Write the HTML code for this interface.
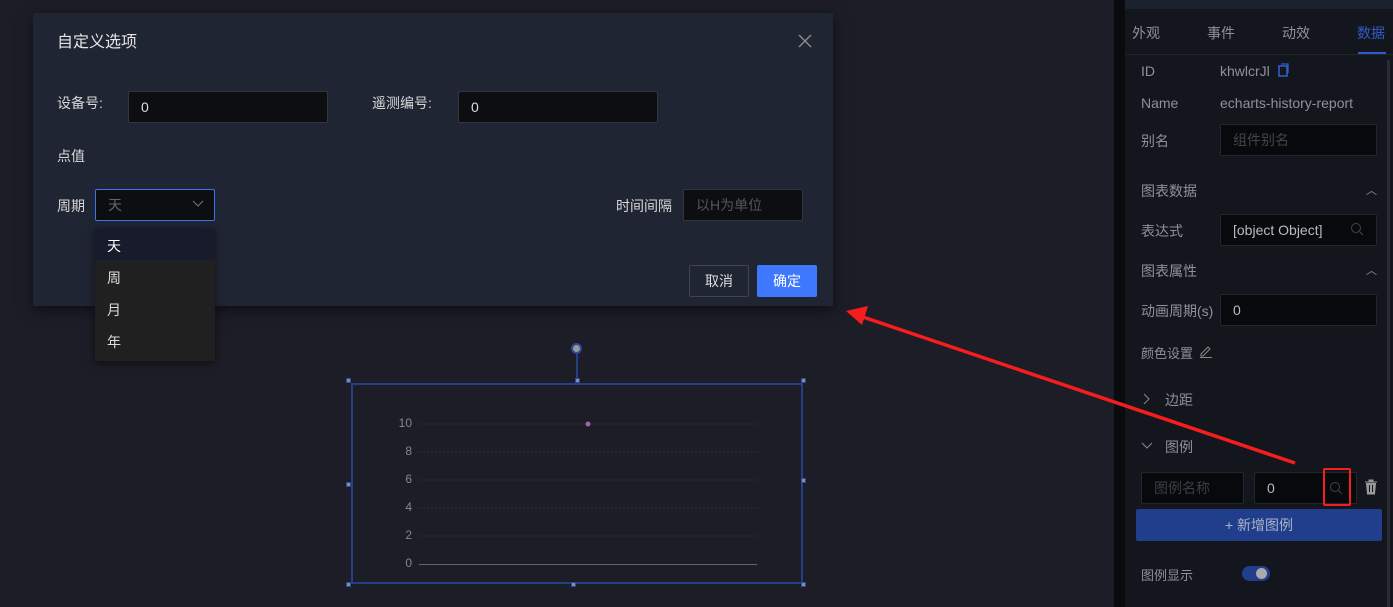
<!DOCTYPE html>
<html><head><meta charset="utf-8"><style>
*{margin:0;padding:0;box-sizing:border-box}
body{width:1393px;height:607px;overflow:hidden;background:#1c1d26;font-family:"Liberation Sans","Noto Sans CJK SC",sans-serif;position:relative;color:#ccc}
.a{position:absolute}
.modal{left:33px;top:13px;width:800px;height:293px;background:#202533;box-shadow:0 4px 14px rgba(0,0,0,.5)}
.lbl{font-size:14px;color:#d8d8d8}
.inp{background:#0d0e12;border:1px solid #33363d;border-radius:2px;font-size:14px;color:#ddd;padding-left:12px;display:flex;align-items:center}
.ph{color:#555}
.pl{font-size:14px;color:#8f9198}
.pin{background:#08090c;border:1px solid #23262d;border-radius:2px;display:flex;align-items:center;font-size:14px;color:#bbb;padding-left:12px}
.h{width:5px;height:5px;background:#8a8fa0;border:1px solid #2b4a9a}
</style></head><body>
<div class="a modal">
 <div class="a" style="left:24px;top:15px;font-size:16px;color:#e5e5e5">自定义选项</div>
 <svg class="a" style="left:765px;top:21px" width="14" height="14"><path d="M1 1L13 13M13 1L1 13" stroke="#888" stroke-width="1.5"/></svg>
 <div class="a lbl" style="left:24px;top:80px">设备号:</div>
 <div class="a inp" style="left:95px;top:78px;width:200px;height:32px">0</div>
 <div class="a lbl" style="left:339px;top:80px">遥测编号:</div>
 <div class="a inp" style="left:425px;top:78px;width:200px;height:32px">0</div>
 <div class="a lbl" style="left:24px;top:133px">点值</div>
 <div class="a lbl" style="left:24px;top:183px">周期</div>
 <div class="a inp" style="left:62px;top:176px;width:120px;height:32px;border-color:#3b74f0"><span class="ph" style="color:#666">天</span></div>
 <svg class="a" style="left:159px;top:187px" width="12" height="8"><path d="M1 1L6 6L11 1" stroke="#777" fill="none"/></svg>
 <div class="a lbl" style="left:583px;top:183px">时间间隔</div>
 <div class="a inp" style="left:650px;top:176px;width:120px;height:32px"><span class="ph">以H为单位</span></div>
 <div class="a" style="left:656px;top:252px;width:60px;height:32px;border:1px solid #444;border-radius:2px;font-size:14px;color:#ddd;display:flex;align-items:center;justify-content:center">取消</div>
 <div class="a" style="left:724px;top:252px;width:60px;height:32px;background:#3d78ff;border-radius:2px;font-size:14px;color:#fff;display:flex;align-items:center;justify-content:center">确定</div>
</div>
<div class="a" style="left:95px;top:228px;width:120px;height:133px;background:#202020;box-shadow:0 2px 8px rgba(0,0,0,.5)">
 <div style="height:32px;background:#171b2b;color:#fff;font-size:14px;padding:8px 12px">天</div>
 <div style="height:32px;color:#ddd;font-size:14px;padding:8px 12px">周</div>
 <div style="height:32px;color:#ddd;font-size:14px;padding:8px 12px">月</div>
 <div style="height:32px;color:#ddd;font-size:14px;padding:8px 12px">年</div>
</div>
<div class="a" style="left:351px;top:383px;width:452px;height:201px;border:2px solid #233f86"></div>
<div class="a" style="left:576px;top:352px;width:2px;height:30px;background:#233f86"></div>
<div class="a" style="left:571px;top:343px;width:11px;height:11px;border-radius:50%;background:#999;border:2px solid #2b4a9a"></div>
<div class="a h" style="left:346px;top:378px"></div><div class="a h" style="left:575px;top:378px"></div><div class="a h" style="left:801px;top:378px"></div>
<div class="a h" style="left:346px;top:482px"></div><div class="a h" style="left:801px;top:478px"></div>
<div class="a h" style="left:346px;top:582px"></div><div class="a h" style="left:571px;top:582px"></div><div class="a h" style="left:801px;top:582px"></div>
<svg class="a" style="left:380px;top:410px" width="390" height="160" font-family="Liberation Sans" font-size="12" fill="#888">
 <g stroke="#2e3038" stroke-dasharray="2 2"><path d="M39 14H377M39 42H377M39 70H377M39 98H377M39 126H377"/></g>
 <path d="M39 154.5H377" stroke="#666"/>
 <text x="32" y="17" text-anchor="end">10</text><text x="32" y="45" text-anchor="end">8</text><text x="32" y="73" text-anchor="end">6</text><text x="32" y="101" text-anchor="end">4</text><text x="32" y="129" text-anchor="end">2</text><text x="32" y="157" text-anchor="end">0</text>
 <circle cx="208" cy="14" r="2.5" fill="#a064a0"/>
</svg>
<div class="a" style="left:1114px;top:0;width:11px;height:607px;background:#0a0b0e"></div>
<div class="a" style="left:1125px;top:0;width:268px;height:607px;background:#14161d"></div>
<div class="a" style="left:1125px;top:0;width:268px;height:9px;background:#1c2130"></div>
<div class="a" style="left:1125px;top:54px;width:268px;height:1px;background:#23252c"></div>
<div class="a" style="left:1387px;top:60px;width:3px;height:547px;background:#2a2c33"></div>
<div class="a pl" style="left:1132px;top:23px">外观</div>
<div class="a pl" style="left:1207px;top:23px">事件</div>
<div class="a pl" style="left:1282px;top:23px">动效</div>
<div class="a" style="left:1357px;top:23px;font-size:14px;color:#2f5cc8">数据</div>
<div class="a" style="left:1358px;top:52px;width:28px;height:2px;background:#2f5cc8"></div>
<div class="a pl" style="left:1141px;top:63px">ID</div>
<div class="a pl" style="left:1220px;top:63px">khwlcrJl</div>
<svg class="a" style="left:1277px;top:63px" width="12" height="14"><rect x="2" y="3" width="8" height="10" fill="none" stroke="#2f5cc8" stroke-width="1.6"/><path d="M4 1H11V10" stroke="#2f5cc8" fill="none" stroke-width="1.3"/></svg>
<div class="a pl" style="left:1141px;top:95px">Name</div>
<div class="a pl" style="left:1220px;top:95px">echarts-history-report</div>
<div class="a pl" style="left:1141px;top:131px">别名</div>
<div class="a pin" style="left:1220px;top:124px;width:157px;height:32px;color:#444">组件别名</div>
<div class="a pl" style="left:1141px;top:181px">图表数据</div>
<div class="a pl" style="left:1366px;top:182px;font-size:11px">︿</div>
<div class="a pl" style="left:1141px;top:221px">表达式</div>
<div class="a pin" style="left:1220px;top:214px;width:157px;height:32px">[object Object]</div>
<svg class="a" style="left:1350px;top:222px" width="14" height="14"><circle cx="6" cy="6" r="4.5" stroke="#444" fill="none"/><path d="M9.5 9.5L13 13" stroke="#444"/></svg>
<div class="a pl" style="left:1141px;top:261px">图表属性</div>
<div class="a pl" style="left:1366px;top:262px;font-size:11px">︿</div>
<div class="a pl" style="left:1141px;top:301px">动画周期(s)</div>
<div class="a pin" style="left:1220px;top:294px;width:157px;height:32px">0</div>
<div class="a pl" style="left:1141px;top:343px;font-size:13px">颜色设置</div>
<svg class="a" style="left:1199px;top:344px" width="14" height="14"><path d="M2 10L9 3L11 5L4 12H2ZM1 13.5H13" stroke="#888" fill="none"/></svg>
<svg class="a" style="left:1143px;top:393px" width="8" height="12"><path d="M1 1L6 6L1 11" stroke="#888" fill="none"/></svg>
<div class="a pl" style="left:1165px;top:390px">边距</div>
<svg class="a" style="left:1141px;top:442px" width="12" height="8"><path d="M1 1L6 6L11 1" stroke="#888" fill="none"/></svg>
<div class="a pl" style="left:1165px;top:437px">图例</div>
<div class="a pin" style="left:1141px;top:472px;width:103px;height:32px;color:#3c3e44">图例名称</div>
<div class="a pin" style="left:1254px;top:472px;width:103px;height:32px">0</div>
<svg class="a" style="left:1329px;top:481px" width="14" height="14"><circle cx="6" cy="6" r="4.5" stroke="#444" fill="none"/><path d="M9.5 9.5L13 13" stroke="#444"/></svg>
<div class="a" style="left:1323px;top:468px;width:28px;height:38px;border:2px solid #f51d1d;border-radius:2px"></div>
<svg class="a" style="left:1364px;top:479px" width="14" height="16"><path d="M1 3H13M5 3V1H9V3M2.5 4.5H11.5L10.5 15H3.5Z" stroke="#999" fill="#999" stroke-width="1"/><path d="M5.5 6V13M8.5 6V13" stroke="#14161d"/></svg>
<div class="a" style="left:1136px;top:509px;width:246px;height:32px;background:#213e8c;border-radius:2px;font-size:14px;color:#aab3c8;display:flex;align-items:center;justify-content:center">+ 新增图例</div>
<div class="a pl" style="left:1141px;top:565px;font-size:13px">图例显示</div>
<div class="a" style="left:1242px;top:566px;width:28px;height:15px;border-radius:8px;background:#213e8c"></div>
<div class="a" style="left:1256px;top:568px;width:11px;height:11px;border-radius:50%;background:#aaa"></div>
<svg class="a" style="left:0;top:0" width="1393" height="607"><path d="M1295 463L860 316" stroke="#f51d1d" stroke-width="3.5"/><path d="M846 311L868 306L862 325Z" fill="#f51d1d"/></svg>
</body></html>
